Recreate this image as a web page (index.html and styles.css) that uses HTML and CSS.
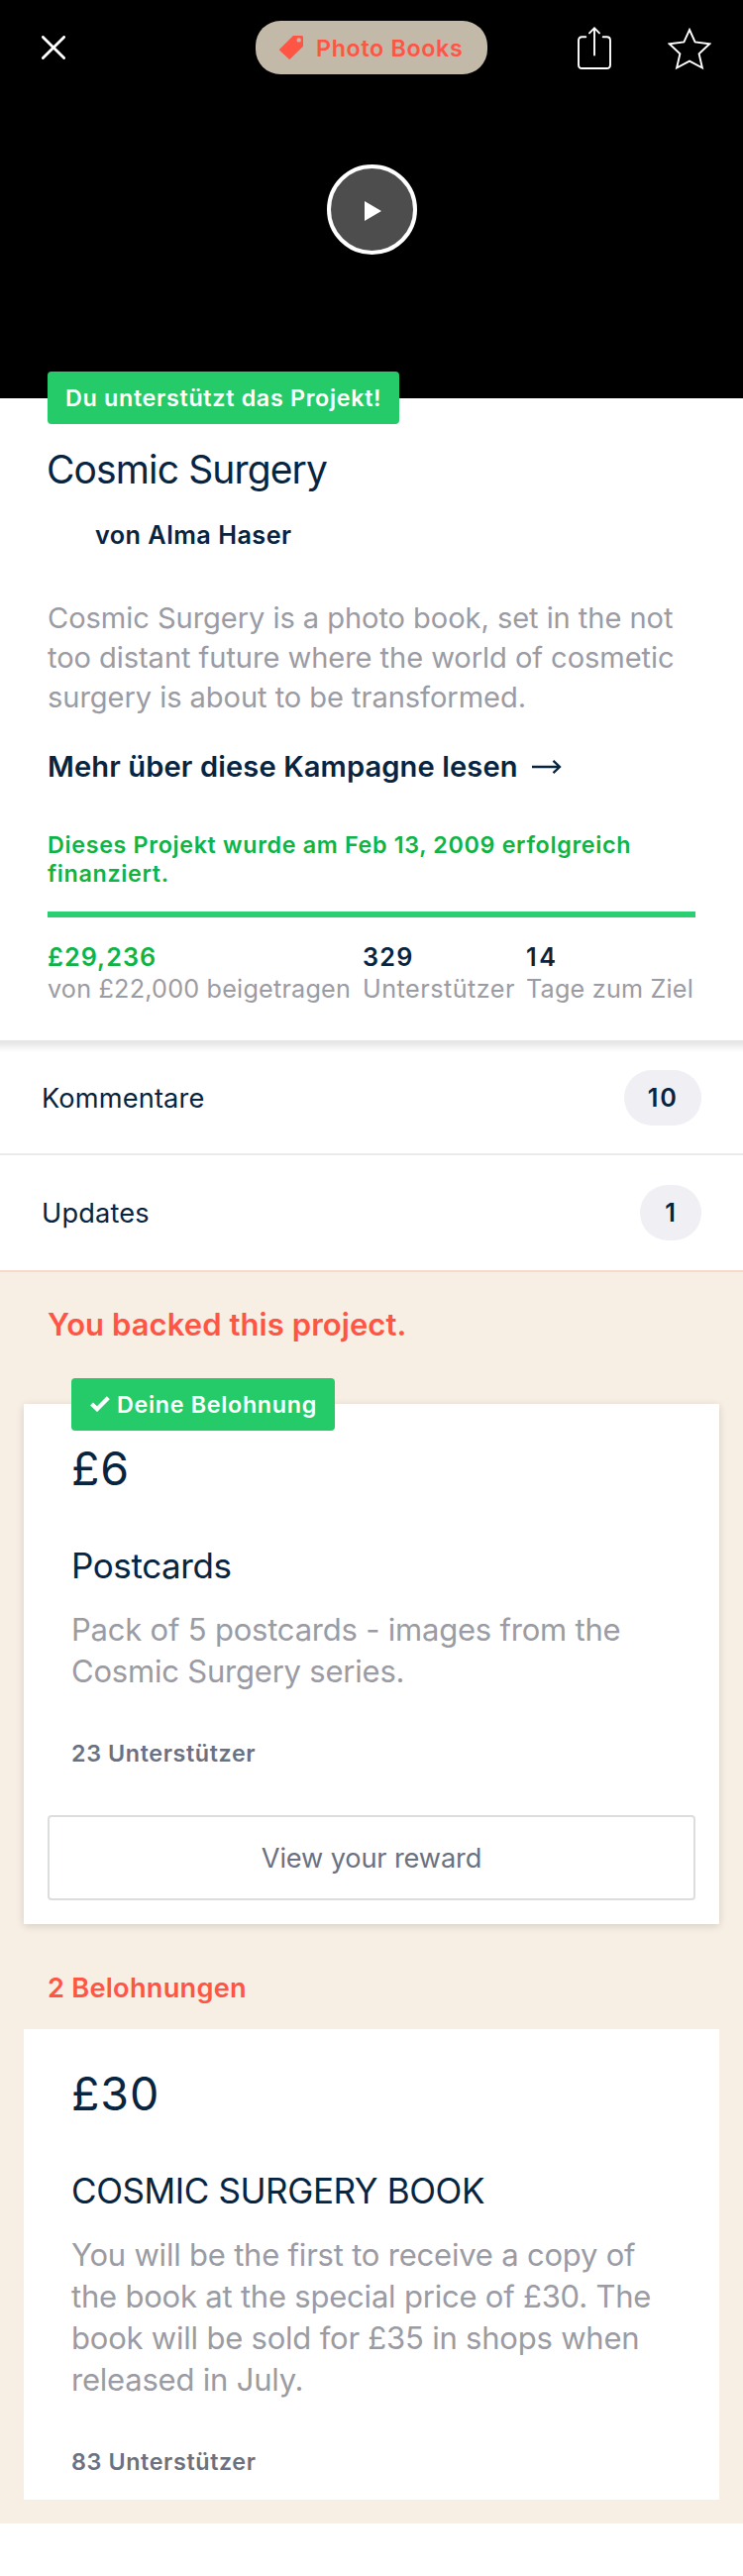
FILE: index.html
```html
<!DOCTYPE html>
<html lang="de">
<head>
<meta charset="utf-8">
<title>Cosmic Surgery</title>
<link rel="stylesheet" href="styles.css">
</head>
<body>
<header class="hero">
  <nav class="nav">
    <svg class="close" width="24" height="24" viewBox="0 0 24 24"><path d="M1.4 1.4 22.6 22.6M22.6 1.4 1.4 22.6"/></svg>
    <div class="category">
      <svg width="24" height="24" viewBox="0 0 24 24"><path fill-rule="evenodd" d="M14 0H22.500Q24 0 24 1.500V10.700L11 23.600Q10.300 24.200 9.600 23.600L.400 15Q-.200 14.300 .400 13.600ZM19.700 2.200a2.200 2.200 0 1 0 0 4.400 2.200 2.200 0 0 0 0-4.400Z"/></svg>
      <span>Photo Books</span>
    </div>
    <div class="actions">
      <svg width="34" height="44" viewBox="0 0 34 44"><path d="M8.300 10.300H4.500Q1 10.300 1 13.800V38.500Q1 42 4.500 42H29.500Q33 42 33 38.500V13.800Q33 10.300 29.500 10.300H25.700M17 28.500V1.500M12 6.400 17 1.400 22 6.400"/></svg>
      <svg width="44" height="44" viewBox="0 0 44 44"><path d="M22 3 27.600 15.400 42.300 17.300 31.600 27.300 34.900 41.500 22 34.600 9.100 41.500 12.400 27.300 1.700 17.300 16.400 15.400Z"/></svg>
    </div>
  </nav>
  <button class="play" aria-label="Play"><svg width="17" height="20" viewBox="0 0 17 20"><path d="M0 0 17 10 0 20Z"/></svg></button>
</header>

<section class="intro">
  <div class="badge">Du unterstützt das Projekt!</div>
  <h1>Cosmic Surgery</h1>
  <p class="author">von Alma Haser</p>
  <p class="blurb">Cosmic Surgery is a photo book, set in the not<br>too distant future where the world of cosmetic<br>surgery is about to be transformed.</p>
  <a class="more">Mehr über diese Kampagne lesen<svg width="30" height="16" viewBox="0 0 30 16"><path d="M0 8H28M21.500 1.800 28 8 21.500 14.200"/></svg></a>
  <p class="funded">Dieses Projekt wurde am Feb 13, 2009 erfolgreich<br>finanziert.</p>
  <div class="progress"></div>
  <dl class="stats">
    <div class="pledged"><dt>£29,236</dt><dd>von £22,000 beigetragen</dd></div>
    <div><dt>329</dt><dd class="wide">Unterstützer</dd></div>
    <div><dt class="fourteen">14</dt><dd>Tage zum Ziel</dd></div>
  </dl>
</section>

<section class="links">
  <a class="row">Kommentare<span class="count">10</span></a>
  <a class="row">Updates<span class="count">1</span></a>
</section>

<main class="rewards">
  <h2>You backed this project.</h2>
  <article class="card backed">
    <div class="badge"><svg width="20" height="16" viewBox="0 0 20 16"><path d="M1.500 8 7 13.200 18.300 1.800"/></svg>Deine Belohnung</div>
    <div class="price">£6</div>
    <h3>Postcards</h3>
    <p class="text">Pack of 5 postcards - images from the<br>Cosmic Surgery series.</p>
    <p class="backers">23 Unterstützer</p>
    <button class="view">View your reward</button>
  </article>
  <h2 class="small">2 Belohnungen</h2>
  <article class="card">
    <div class="price">£30</div>
    <h3>COSMIC SURGERY BOOK</h3>
    <p class="text">You will be the first to receive a copy of<br>the book at the special price of £30. The<br>book will be sold for £35 in shops when<br>released in July.</p>
    <p class="backers">83 Unterstützer</p>
  </article>
</main>
</body>
</html>
```
FILE: styles.css
```css
* { box-sizing: border-box; margin: 0; padding: 0; }
body { width: 750px; background: #fff; color: #072440; font-family: Inter, "Liberation Sans", sans-serif; }
h1, h2, h3, button { font-weight: 400; font-family: inherit; }
p, h1, h3, .price, .more { white-space: nowrap; }

.hero { height: 402px; background: #000; display: flex; flex-direction: column; align-items: center; }
.nav { width: 100%; height: 96px; padding: 0 32px 0 42px; display: grid; grid-template-columns: 216px 234px 1fr; align-items: center; }
.nav svg, .more svg, .badge svg { fill: none; stroke: #fff; }
.close { stroke-width: 2.8; stroke-linecap: round; }
.category { height: 54px; border-radius: 25px; background: #c3b9a9; color: #ff5545; display: flex; align-items: center; gap: 13px; padding-left: 24px; font-size: 23.3px; font-weight: 600; letter-spacing: .65px; white-space: nowrap; }
.nav .category svg { fill: #ff5545; stroke: none; }
.actions { display: flex; justify-content: flex-end; align-items: center; gap: 57px; margin-top: 1px; }
.actions svg { stroke-width: 1.9; stroke-linecap: round; }
.actions svg + svg { stroke-linecap: butt; }
.play { width: 91px; height: 91px; margin-top: 70px; border: 4px solid #fff; border-radius: 50%; background: #4d4d4d; display: flex; align-items: center; justify-content: center; }
.play svg { fill: #fff; margin: 3px 0 0 2px; }

.badge { display: flex; align-items: center; width: fit-content; height: 53px; border-radius: 4px; background: #26cb69; color: #fff; font-size: 23.3px; font-weight: 600; letter-spacing: .69px; white-space: nowrap; }
.intro { display: flow-root; height: 648px; padding: 0 48px; }
.intro .badge { width: 355px; margin-top: -27px; padding-left: 18px; position: relative; }
h1 { margin-top: 22px; margin-left: -1px; font-size: 39px; line-height: 48px; letter-spacing: -.88px; }
.author { margin: 26px 0 0 48px; font-size: 25.2px; line-height: 32px; font-weight: 600; letter-spacing: .48px; }
.blurb { margin-top: 48px; font-size: 29.1px; line-height: 40px; letter-spacing: -.07px; color: #9b9ba3; }
.more { display: flex; align-items: center; gap: 14px; margin-top: 30px; font-size: 29.1px; line-height: 40px; font-weight: 600; letter-spacing: .12px; }
.more svg { stroke: #072440; stroke-width: 2.3; }
.funded { margin-top: 44px; font-size: 23.3px; line-height: 29px; font-weight: 600; letter-spacing: .66px; color: #0eb445; }
.progress { height: 6px; margin-top: 24px; background: #2bce71; }
.stats { display: grid; grid-template-columns: 318px 165px 1fr; margin-top: 24px; font-size: 25.2px; line-height: 32px; letter-spacing: .2px; white-space: nowrap; }
.stats dt { font-weight: 600; letter-spacing: 1.3px; }
.stats .fourteen { letter-spacing: 2.6px; }
.stats dd { color: #9b9ba3; }
.stats .wide { letter-spacing: .48px; }
.stats .pledged dt { color: #0eb445; letter-spacing: 1.05px; }

.links { background: linear-gradient(#e2e2e2, #fff) 0 0 / 100% 12px no-repeat; }
.row { display: flex; justify-content: space-between; align-items: center; padding: 30px 42px 28px; border-bottom: 2px solid #ebebeb; font-size: 27.2px; letter-spacing: .15px; }
.row + .row { padding-bottom: 30px; border-color: #f9d8cc; }
.count { height: 56px; min-width: 62px; padding: 0 23px 0 24px; border-radius: 28px; background: #efeff4; font-size: 25.2px; line-height: 56px; font-weight: 600; letter-spacing: 2px; text-align: center; }

.rewards { background: #f7efe4; padding: 33px 24px 24px; }
h2 { margin: 0 24px 60px; font-size: 31px; line-height: 40px; font-weight: 600; letter-spacing: .07px; color: #ff5545; }
h2.small { margin: 48px 24px 24px; font-size: 27.2px; line-height: 34px; letter-spacing: .24px; }
.card { background: #fff; padding: 37px 24px 23px; display: flow-root; }
.card > * { margin-left: 24px; }
.backed { padding: 0 24px 24px; box-shadow: 0 2px 8px rgba(0, 0, 0, .14); }
.backed .badge { width: 266px; margin-top: -26px; padding-left: 19px; gap: 7px; }
.badge svg { stroke-width: 4.2; margin-top: -2px; }
.price { font-size: 46.5px; line-height: 56px; letter-spacing: .9px; }
.backed .price { margin-top: 10px; }
h3 { margin-top: 48px; font-size: 35px; line-height: 44px; letter-spacing: -.4px; }
.text { margin-top: 22px; font-size: 31px; line-height: 42px; letter-spacing: -.21px; color: #9b9ba3; }
.backers { margin-top: 46px; font-size: 23.3px; line-height: 31px; font-weight: 600; letter-spacing: .62px; color: #6b7180; }
.view { display: block; width: 654px; height: 86px; margin: 47px 0 0; border: 2px solid #dcdedd; border-radius: 4px; background: #fff; color: #6b7180; font-size: 27.2px; letter-spacing: -.14px; }
```
